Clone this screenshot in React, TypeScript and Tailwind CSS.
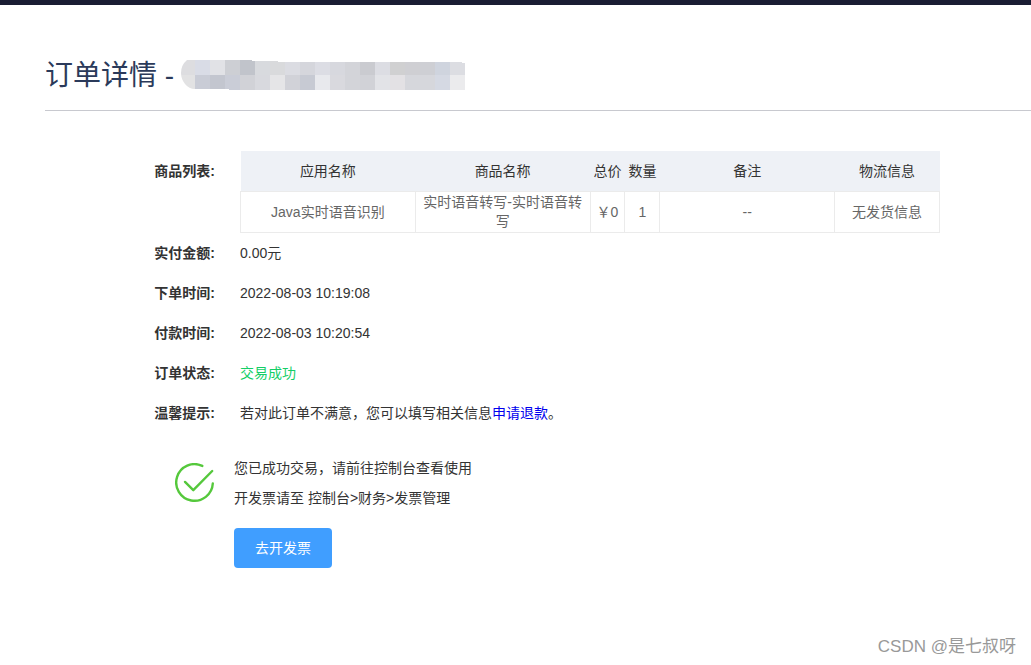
import React from 'react';

interface Goods {
  app: string;
  name: string;
  price: string;
  count: number;
  remark: string;
  logistics: string;
}

const goodsList: Goods[] = [
  {
    app: 'Java实时语音识别',
    name: '实时语音转写-实时语音转写',
    price: '￥0',
    count: 1,
    remark: '--',
    logistics: '无发货信息',
  },
];

// Two rows of tiles that hide the order number
const maskTop = [
  '#dddde0', '#d9dce6', '#e1e2e6', '#cdcfd4', '#c1c4cb', '#d8dade', '#d9dadc', '#dbdce2', '#d5d6dc', '#dcdde4',
  '#d7d8de', '#d3d4d9', '#cacbd0', '#dcdde3', '#d0d0d1', '#cfcfd3', '#cecfd4', '#cfd4de', '#dcdde2',
];
const maskBottom = [
  '#e2e2e3', '#c9ccd6', '#c3c6cf', '#cacdd7', '#d1d2d7', '#d8d9de', '#e5e5e7', '#d1d2d8', '#c7cad3', '#e8e9ed',
  '#d9d9de', '#d3d4d9', '#d1d2d7', '#e2e3e7', '#e3e1e4', '#d6d7dc', '#d6d7dc', '#d5d9e3', '#ebebed',
];

const OrderMask: React.FC = () => (
  <svg width="284" height="32" viewBox="1 0 284 32" aria-hidden="true">
    <defs>
      <clipPath id="mask-shape">
        <path d="M7 0H72V1H98V2H282V3H285V30H49V29H15Q9 29 5 24Q1 19 1 13Q1 5 7 0Z" />
      </clipPath>
    </defs>
    <g clipPath="url(#mask-shape)" shapeRendering="crispEdges">
      {maskTop.map((color, i) => (
        <rect key={`t${i}`} x={i * 15} y="0" width="15" height="15" fill={color} />
      ))}
      {maskBottom.map((color, i) => (
        <rect key={`b${i}`} x={i * 15} y="15" width="15" height="15" fill={color} />
      ))}
    </g>
  </svg>
);

const SuccessIcon: React.FC = () => (
  <svg
    className="shrink-0"
    width="40"
    height="40"
    viewBox="0 0 40 40"
    fill="none"
    stroke="#55c83c"
    strokeWidth="2.4"
    strokeLinecap="round"
    strokeLinejoin="round"
    aria-hidden="true"
  >
    <path d="M27.3 2.9A18.3 18.3 0 1 0 37.8 20.5" />
    <path d="M10 18.9L18.3 27.2L37.2 8" />
  </svg>
);

interface RowProps {
  label: string;
  children: React.ReactNode;
}

const Row: React.FC<RowProps> = ({ label, children }) => (
  <div className="flex">
    <dt className="w-[170px] shrink-0 text-right font-bold leading-10">{label}:</dt>
    <dd className="ml-[25px] min-w-0 flex-1 leading-10">{children}</dd>
  </div>
);

const GoodsTable: React.FC = () => (
  <table className="w-full max-w-[700px] table-fixed border-collapse text-center leading-[19px]">
    <colgroup>
      <col className="w-[25%]" />
      <col className="w-[25%]" />
      <col className="w-[5%]" />
      <col className="w-[5%]" />
      <col className="w-[25%]" />
      <col className="w-[15%]" />
    </colgroup>
    <thead>
      <tr className="h-10 bg-[#eef1f6]">
        <th className="pt-px font-normal">应用名称</th>
        <th className="pt-px font-normal">商品名称</th>
        <th className="whitespace-nowrap pt-px font-normal">总价</th>
        <th className="whitespace-nowrap pt-px font-normal">数量</th>
        <th className="pt-px font-normal">备注</th>
        <th className="pt-px font-normal">物流信息</th>
      </tr>
    </thead>
    <tbody className="text-[#666]">
      {goodsList.map((item) => (
        <tr key={item.app} className="h-[41px]">
          <td className="border border-[#ebebeb] pt-px">{item.app}</td>
          <td className="border border-[#ebebeb] px-1 pt-px">{item.name}</td>
          <td className="border border-[#ebebeb] pt-px">{item.price}</td>
          <td className="border border-[#ebebeb] pt-px">{item.count}</td>
          <td className="border border-[#ebebeb] pt-px">{item.remark}</td>
          <td className="border border-[#ebebeb] pt-px">{item.logistics}</td>
        </tr>
      ))}
    </tbody>
  </table>
);

const App: React.FC = () => {
  return (
    <div className="flex min-h-screen flex-col bg-white font-['Liberation_Sans','Noto_Sans_CJK_SC',sans-serif] text-sm text-[#333]">
      <header className="h-[5px] bg-[#1a1d33]"></header>

      <main className="pl-[45px]">
        <div className="flex h-[106px] items-center border-b border-[#c8c9cf] pt-9">
          <h1 className="mr-[7px] whitespace-nowrap text-[28px] leading-10 text-[#2b3a5a]">订单详情 -</h1>
          <OrderMask />
        </div>

        <dl className="mt-10">
          <Row label="商品列表">
            <GoodsTable />
          </Row>
          <Row label="实付金额">0.00元</Row>
          <Row label="下单时间">2022-08-03 10:19:08</Row>
          <Row label="付款时间">2022-08-03 10:20:54</Row>
          <Row label="订单状态">
            <span className="text-[#13ce66]">交易成功</span>
          </Row>
          <Row label="温馨提示">
            若对此订单不满意，您可以填写相关信息
            <a href="#refund" className="text-[#0000ee]">申请退款</a>。
          </Row>
        </dl>

        <section className="mt-5 flex pl-[130px]">
          <div className="pt-[10px]">
            <SuccessIcon />
          </div>
          <div className="ml-[19px]">
            <p className="leading-[30px]">您已成功交易，请前往控制台查看使用</p>
            <p className="leading-[30px]">开发票请至 控制台&gt;财务&gt;发票管理</p>
            <button type="button" className="mt-[15px] h-10 w-[98px] rounded bg-[#409eff] text-white">
              去开发票
            </button>
          </div>
        </section>
      </main>

      <footer className="mt-auto pr-[15px] pb-1 text-right text-[17px] leading-7 text-[#999]">
        CSDN @是七叔呀
      </footer>
    </div>
  );
};

export default App;
